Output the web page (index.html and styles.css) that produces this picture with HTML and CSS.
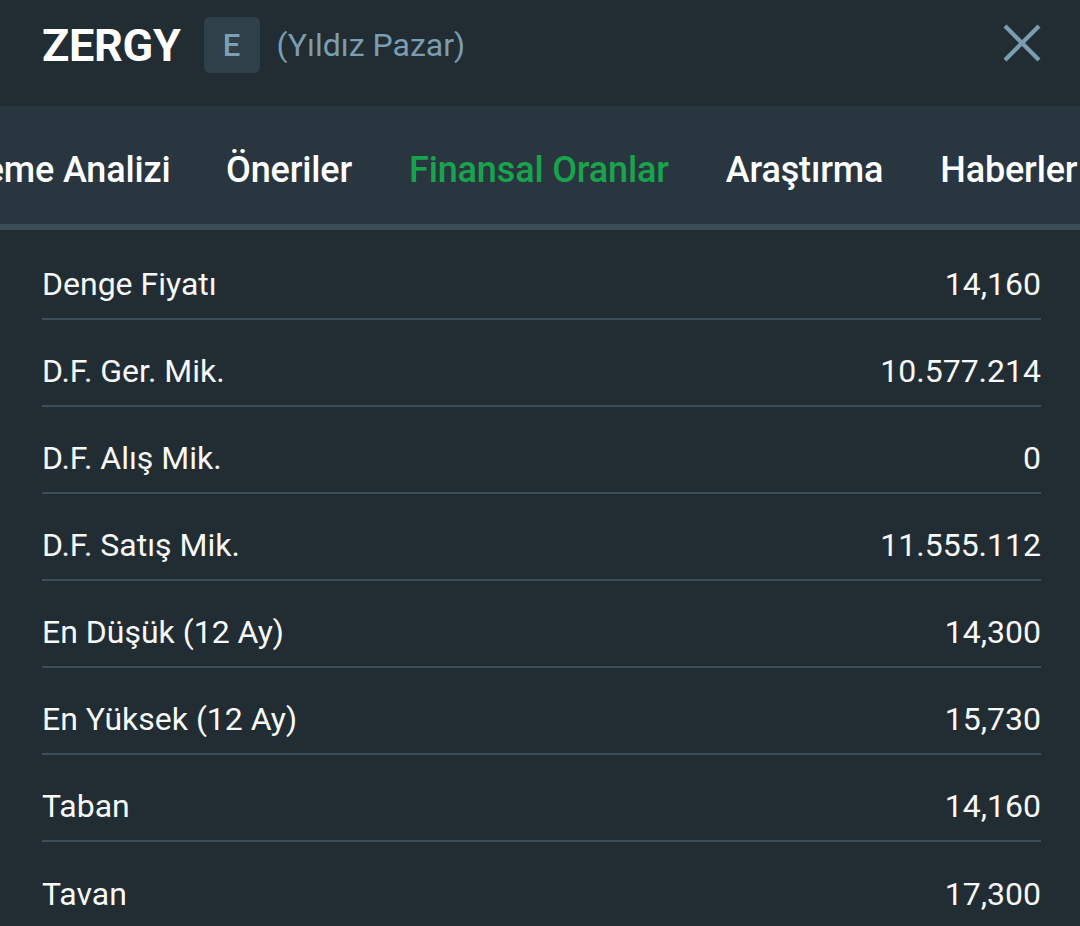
FILE: index.html
```html
<!DOCTYPE html>
<html lang="tr">
<head>
<meta charset="utf-8">
<title>ZERGY</title>
<link rel="stylesheet" href="styles.css">
</head>
<body>
<div class="screen">
  <header class="head">
    <div class="title">
      <span class="symbol">ZERGY</span>
      <span class="badge">E</span>
      <span class="market">(Yıldız Pazar)</span>
    </div>
    <svg class="close" viewBox="0 0 40 40" width="40" height="40">
      <path d="M3 3 L37 37 M37 3 L3 37" stroke="#7a9db2" stroke-width="4.2" fill="none"/>
    </svg>
  </header>
  <nav class="tabs">
    <div class="tab-strip">
      <div class="tab first">Değerleme Analizi</div>
      <div class="tab">Öneriler</div>
      <div class="tab active">Finansal Oranlar</div>
      <div class="tab">Araştırma</div>
      <div class="tab">Haberler</div>
    </div>
  </nav>
  <main class="list">
    <div class="row"><span>Denge Fiyatı</span><span>14,160</span></div>
    <div class="row"><span>D.F. Ger. Mik.</span><span>10.577.214</span></div>
    <div class="row"><span>D.F. Alış Mik.</span><span>0</span></div>
    <div class="row"><span>D.F. Satış Mik.</span><span>11.555.112</span></div>
    <div class="row"><span>En Düşük (12 Ay)</span><span>14,300</span></div>
    <div class="row"><span>En Yüksek (12 Ay)</span><span>15,730</span></div>
    <div class="row"><span>Taban</span><span>14,160</span></div>
    <div class="row"><span>Tavan</span><span>17,300</span></div>
  </main>
</div>
</body>
</html>
```
FILE: styles.css
```css
* { box-sizing: border-box; }
html, body { margin: 0; padding: 0; }
body {
  background: #222c33;
  font-family: Roboto, "Noto Sans", sans-serif;
  color: #f7f8f8;
  width: 1080px;
  height: 926px;
  overflow: hidden;
}
.screen { width: 1080px; }
.head {
  height: 106px;
  background: #222c33;
  display: flex;
  align-items: center;
  justify-content: space-between;
  padding: 0 38px 0 42px;
}
.title { display: flex; align-items: center; margin-top: -16px; }
.symbol {
  font-size: 45px;
  font-weight: 700;
  color: #ffffff;
  letter-spacing: -0.3px;
}
.badge {
  width: 56px;
  height: 56px;
  margin-left: 23px;
  border-radius: 6px;
  background: #2f404a;
  color: #7d9fb4;
  font-size: 31px;
  font-weight: 500;
  display: flex;
  align-items: center;
  justify-content: center;
}
.market {
  margin-left: 17px;
  font-size: 32px;
  color: #7b9db2;
}
.close { margin-top: -20px; }
.tabs {
  height: 124px;
  background: #29363f;
  border-bottom: 6px solid #3b4d58;
  overflow: hidden;
  position: relative;
}
.tab-strip {
  display: flex;
  height: 100%;
}
.tab {
  flex: none;
  padding: 3px 28.5px 0;
  font-size: 36px;
  font-weight: 500;
  letter-spacing: -0.15px;
  color: #ffffff;
  display: flex;
  align-items: center;
  white-space: nowrap;
  margin-bottom: -6px;
  position: relative;
}
.tab.first {
  width: 197.5px;
  justify-content: flex-end;
  overflow: hidden;
  padding-left: 0;
  padding-right: 27px;
}
.tab.active { color: #17a44d; }
.tab.active::after {
  content: "";
  position: absolute;
  left: 0;
  right: 0;
  bottom: 0;
  height: 6px;
  background: #17a44d;
}
.list { padding: 3px 39px 0 42px; }
.row {
  display: flex;
  justify-content: space-between;
  align-items: center;
  height: 87px;
  padding: 16px 0 0;
  border-bottom: 2px solid #3c4e59;
  font-size: 32px;
  line-height: 32px;
}
.row:last-child { border-bottom: none; }
```
